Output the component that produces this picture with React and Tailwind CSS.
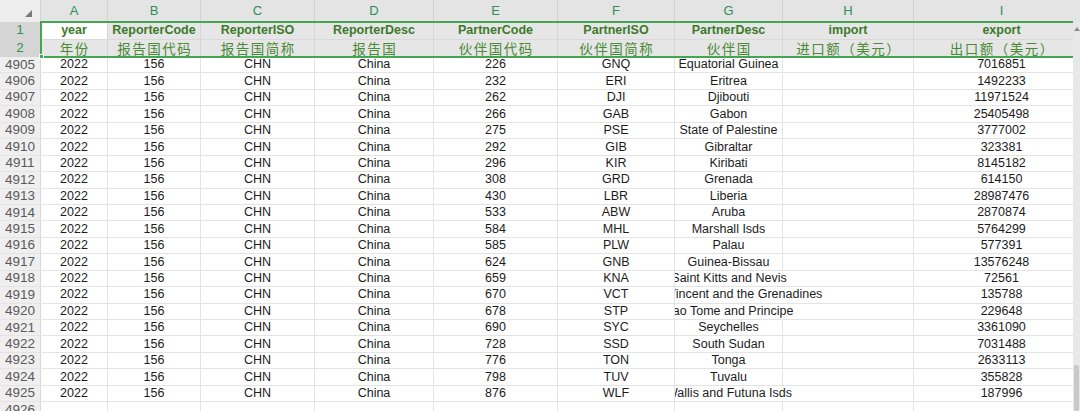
import React from "react";

const W = [
  "w-[41px]",
  "w-[67px]",
  "w-[93px]",
  "w-[114px]",
  "w-[119px]",
  "w-[124px]",
  "w-[117px]",
  "w-[108px]",
  "w-[131px]",
  "w-[176px]",
];

const letters = ["A", "B", "C", "D", "E", "F", "G", "H", "I"];
const fields = [
  "year",
  "ReporterCode",
  "ReporterISO",
  "ReporterDesc",
  "PartnerCode",
  "PartnerISO",
  "PartnerDesc",
  "import",
  "export",
];
const zh = [
  "年份",
  "报告国代码",
  "报告国简称",
  "报告国",
  "伙伴国代码",
  "伙伴国简称",
  "伙伴国",
  "进口额（美元）",
  "出口额（美元）",
];

const rows = [
  [4905, 226, "GNQ", "Equatorial Guinea", 7016851],
  [4906, 232, "ERI", "Eritrea", 1492233],
  [4907, 262, "DJI", "Djibouti", 11971524],
  [4908, 266, "GAB", "Gabon", 25405498],
  [4909, 275, "PSE", "State of Palestine", 3777002],
  [4910, 292, "GIB", "Gibraltar", 323381],
  [4911, 296, "KIR", "Kiribati", 8145182],
  [4912, 308, "GRD", "Grenada", 614150],
  [4913, 430, "LBR", "Liberia", 28987476],
  [4914, 533, "ABW", "Aruba", 2870874],
  [4915, 584, "MHL", "Marshall Isds", 5764299],
  [4916, 585, "PLW", "Palau", 577391],
  [4917, 624, "GNB", "Guinea-Bissau", 13576248],
  [4918, 659, "KNA", "Saint Kitts and Nevis", 72561, true],
  [4919, 670, "VCT", "Saint Vincent and the Grenadines", 135788, true],
  [4920, 678, "STP", "Sao Tome and Principe", 229648, true],
  [4921, 690, "SYC", "Seychelles", 3361090],
  [4922, 728, "SSD", "South Sudan", 7031488],
  [4923, 776, "TON", "Tonga", 2633113],
  [4924, 798, "TUV", "Tuvalu", 355828],
  [4925, 876, "WLF", "Wallis and Futuna Isds", 187996, true],
];

const sans = "font-['Liberation_Sans',Arial,sans-serif]";
const cjk = "font-['Noto_Sans_CJK_SC','Liberation_Sans',sans-serif]";

function Cell({ i, className = "", children }) {
  return (
    <div
      className={`${W[i]} shrink-0 h-full flex items-center justify-center whitespace-nowrap ${className}`}
    >
      {children}
    </div>
  );
}

function DataRow({ r }) {
  const [num, code, iso, desc, exp, spill] = r;
  const vals = [2022, 156, "CHN", "China", code, iso, desc, "", exp];
  return (
    <div className="flex h-[16.45px] border-b border-[#e4e4e4] text-[12.5px] text-[#1c1c1c]">
      <Cell i={0} className="bg-[#efefef] border-r border-[#d8d8d8] text-[13.5px] text-[#5a5a5a]">
        {num}
      </Cell>
      {vals.map((v, k) => (
        <Cell
          key={k}
          i={k + 1}
          className={
            k === 6
              ? `relative z-10 [clip-path:inset(0_-300px_0_0)] ${spill ? "" : "border-r border-[#e4e4e4]"}`
              : "border-r border-[#e4e4e4]"
          }
        >
          {v}
        </Cell>
      ))}
    </div>
  );
}

export default function App() {
  return (
    <div className={`relative w-[1080px] h-[411px] overflow-hidden bg-white flex ${sans}`}>
      <div className="relative w-[1073px] h-full overflow-hidden">
        {/* column letters */}
        <div className="flex h-[22px] bg-[#e4e4e4] text-[13px] text-[#2f8f5b]">
          <Cell i={0} className="bg-[#ededed] border-r border-[#d2d2d2] relative">
            <span className="absolute right-[8px] bottom-[5px] w-0 h-0 border-l-[7px] border-l-transparent border-b-[7px] border-b-[#7a7a7a]" />
          </Cell>
          {letters.map((l, k) => (
            <Cell key={l} i={k + 1} className="border-r border-[#d2d2d2]">
              {l}
            </Cell>
          ))}
        </div>
        {/* row 1 */}
        <div className="flex h-[17.5px] border-b border-[#d9d9d9] text-[12.5px] font-bold text-[#3c7a2b]">
          <Cell i={0} className="bg-[#d5d5d5] border-r border-[#c4c4c4] text-[13.5px] font-normal text-[#2f8f5b]">
            1
          </Cell>
          {fields.map((f, k) => (
            <Cell
              key={f}
              i={k + 1}
              className={`${k === 0 ? "bg-white" : "bg-[#e6e6e6]"} border-r border-[#d6d6d6]`}
            >
              {f}
            </Cell>
          ))}
        </div>
        {/* row 2 */}
        <div className="flex h-[17.5px] text-[13.5px] text-[#4a8a37]">
          <Cell i={0} className="bg-[#d5d5d5] border-r border-[#c4c4c4] text-[#2f8f5b]">
            <span className={sans}>2</span>
          </Cell>
          {zh.map((z, k) => (
            <Cell key={k} i={k + 1} className={`bg-[#e6e6e6] border-r border-[#d6d6d6] ${cjk}`}>
              <span className="tracking-[1.5px] pl-[1.5px]">{z}</span>
            </Cell>
          ))}
        </div>
        {/* data */}
        {rows.map((r) => (
          <DataRow key={r[0]} r={r} />
        ))}
        <div className="flex h-[16.45px] text-[13.5px] text-[#5a5a5a]">
          <Cell i={0} className="bg-[#efefef] border-r border-[#d8d8d8]">
            4926
          </Cell>
          {letters.map((l, k) => (
            <Cell key={l} i={k + 1} className="border-r border-[#e4e4e4]" />
          ))}
        </div>

        {/* selection outline over rows 1-2 */}
        <div className="absolute left-[40px] top-[21px] w-[1100px] h-[37px] border-2 border-[#44a553] pointer-events-none z-20" />
        <div className="absolute left-[39px] top-[54px] w-[5px] h-[5px] bg-[#44a553] border border-white z-30" />
      </div>

      {/* scrollbar */}
      <div className="w-[7px] h-full bg-[#e8e8e8] flex flex-col">
        <div className="h-[22px] bg-[#e4e4e4]" />
        <div className="h-[14px] flex items-center justify-center">
          <span className="w-0 h-0 border-l-[3px] border-l-transparent border-r-[3px] border-r-transparent border-b-[4px] border-b-[#8a8a8a]" />
        </div>
        <div className="flex-1" />
        <div className="h-[46px] mx-[1px] rounded-[2px] bg-[#c9c9c9]" />
      </div>
    </div>
  );
}
